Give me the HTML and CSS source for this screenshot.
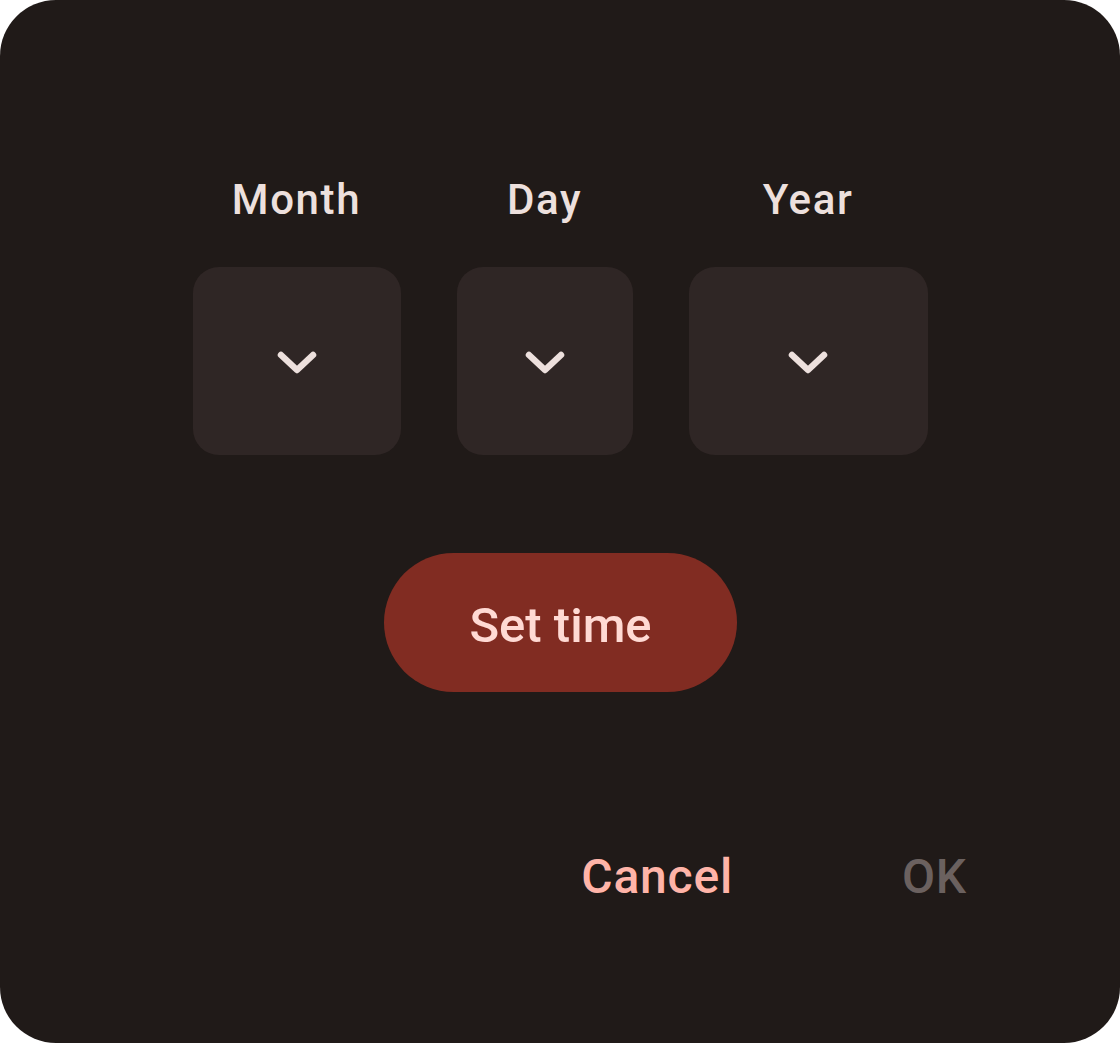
FILE: index.html
```html
<!DOCTYPE html>
<html lang="en">
<head>
<meta charset="utf-8">
<title>Date picker</title>
<link rel="stylesheet" href="styles.css">
</head>
<body>
<div class="dialog">
  <div class="fields">
    <div class="field field-month">
      <div class="label">Month</div>
      <div class="box"><svg class="chev" viewBox="0 0 40 24" width="40" height="24"><polyline points="4,4 20,19 36,4"/></svg></div>
    </div>
    <div class="field field-day">
      <div class="label">Day</div>
      <div class="box"><svg class="chev" viewBox="0 0 40 24" width="40" height="24"><polyline points="4,4 20,19 36,4"/></svg></div>
    </div>
    <div class="field field-year">
      <div class="label">Year</div>
      <div class="box"><svg class="chev" viewBox="0 0 40 24" width="40" height="24"><polyline points="4,4 20,19 36,4"/></svg></div>
    </div>
  </div>
  <button class="set-time">Set time</button>
  <div class="actions">
    <span class="action cancel">Cancel</span>
    <span class="action ok">OK</span>
  </div>
</div>
</body>
</html>
```
FILE: styles.css
```css
html, body {
  margin: 0;
  padding: 0;
  background: #ffffff;
}
.dialog {
  width: 1120px;
  height: 1043px;
  box-sizing: border-box;
  border-radius: 56px;
  background: #201a18;
  display: flex;
  flex-direction: column;
  align-items: center;
  padding-top: 175px;
  font-family: Roboto, "Liberation Sans", sans-serif;
  font-weight: 500;
}
.fields {
  display: flex;
  gap: 56px;
}
.field {
  display: flex;
  flex-direction: column;
  align-items: center;
  gap: 42px;
}
.label {
  font-size: 42px;
  line-height: 50px;
  letter-spacing: 1.6px;
  color: #ede0dd;
}
.box {
  height: 188px;
  border-radius: 26px;
  background: #2f2625;
  display: flex;
  align-items: center;
  justify-content: center;
}
.field-month .box { width: 208px; }
.field-day .box { width: 176px; }
.field-year .box { width: 239px; }
.chev {
  display: block;
  margin-top: 4px;
}
.chev polyline {
  fill: none;
  stroke: #ede0dd;
  stroke-width: 6.5;
  stroke-linecap: round;
  stroke-linejoin: round;
}
.set-time {
  margin-top: 98px;
  width: 353px;
  height: 139px;
  border: none;
  border-radius: 70px;
  background: #812c22;
  color: #ffdad4;
  font-family: Roboto, "Liberation Sans", sans-serif;
  font-weight: 500;
  font-size: 49px;
  padding: 6px 0 0 0;
  margin-left: 1px;
}
.actions {
  align-self: stretch;
  display: flex;
  justify-content: flex-end;
  gap: 169px;
  padding-right: 153px;
  margin-top: 157px;
}
.action {
  font-size: 48px;
  line-height: 56px;
  letter-spacing: 0.8px;
}
.cancel { color: #ffb4a8; }
.ok { color: #6b615f; }
```
